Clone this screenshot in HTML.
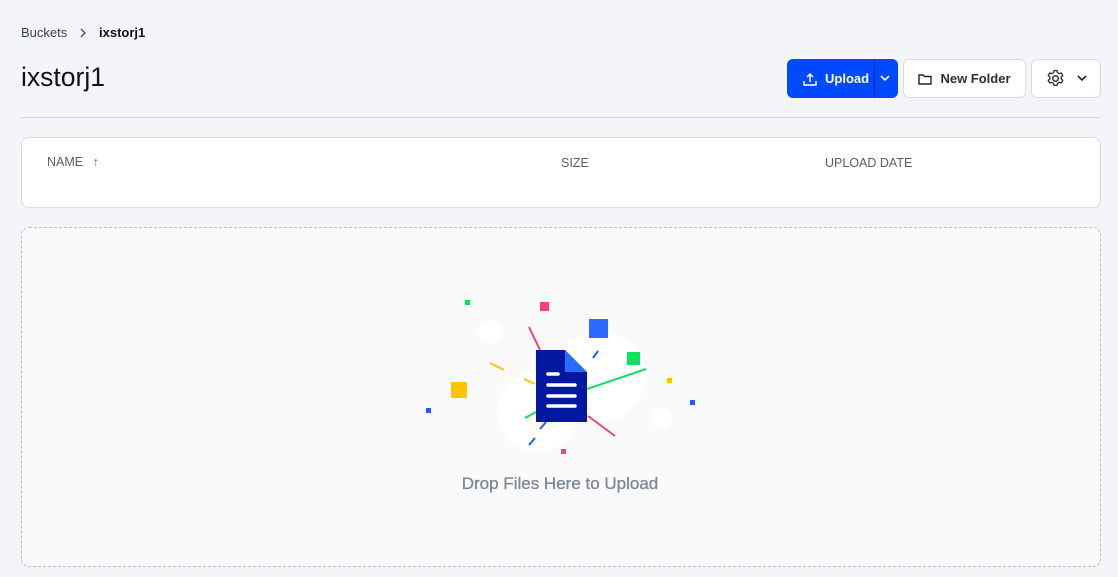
<!DOCTYPE html>
<html><head><style>
*{box-sizing:border-box;margin:0;padding:0}
body{width:1118px;height:577px;background:#f4f5f9;font-family:"Liberation Sans",sans-serif;position:relative;overflow:hidden;color:#1b2533}
.a{position:absolute}
.btn{position:absolute;top:59px;height:39px;border-radius:6px;display:flex;align-items:center;justify-content:center;font-weight:bold;font-size:13px}
</style></head><body>
<div class="a" style="left:21px;top:25px;font-size:13px;color:#384049">Buckets</div>
<svg class="a" style="left:79px;top:28px" width="8" height="10"><path d="M2 1l4 4-4 4" stroke="#555" stroke-width="1.5" fill="none"/></svg>
<div class="a" style="left:99px;top:25px;font-size:13px;font-weight:bold;color:#111">ixstorj1</div>
<div class="a" style="left:21px;top:62px;font-size:26.5px;color:#111">ixstorj1</div>
<div class="btn" style="left:787px;width:111px;background:#0149ff;color:#fff;justify-content:flex-start">
<svg style="margin-left:16px" width="14" height="14" viewBox="0 0 14 14"><path d="M7 10V2M4 5l3-3 3 3M1 9v4h12V9" stroke="#fff" stroke-width="1.5" fill="none"/></svg>
<span style="margin-left:8px">Upload</span>
<div style="position:absolute;left:87px;top:0;bottom:0;border-left:1px solid #0a2a99"></div>
<svg style="position:absolute;left:93px;top:16px" width="10" height="7"><path d="M1 1l4 4 4-4" stroke="#fff" stroke-width="1.6" fill="none"/></svg>
</div>
<div class="btn" style="left:903px;width:123px;background:#fff;border:1px solid #d8dbe2;color:#27303c">
<svg width="14" height="12" viewBox="0 0 14 12" style="margin-right:8px"><path d="M1 2h4l1.5 1.5H13V11H1z" stroke="#222" stroke-width="1.4" fill="none"/></svg>New Folder</div>
<div class="btn" style="left:1031px;width:70px;background:#fff;border:1px solid #d8dbe2">
<svg width="19" height="19" viewBox="0 0 18 18"><circle cx="9" cy="9" r="2.6" stroke="#333" stroke-width="1.4" fill="none"/><path d="M7.6 1.5h2.8l.5 2 1.6.9 2-.6 1.4 2.4-1.5 1.4v1.8l1.5 1.4-1.4 2.4-2-.6-1.6.9-.5 2H7.6l-.5-2-1.6-.9-2 .6-1.4-2.4 1.5-1.4V7.6L2.1 6.2l1.4-2.4 2 .6 1.6-.9z" stroke="#333" stroke-width="1.3" fill="none" stroke-linejoin="round"/></svg>
<svg style="margin-left:12px" width="10" height="7"><path d="M1 1l4 4 4-4" stroke="#222" stroke-width="1.6" fill="none"/></svg></div>
<div class="a" style="left:21px;top:117px;width:1080px;border-top:1px solid #d4d6dc"></div>
<div class="a" style="left:21px;top:137px;width:1080px;height:71px;background:#fff;border:1px solid #d8dbe2;border-radius:8px;font-size:12.5px;color:#56606d">
<span class="a" style="left:25px;top:17px">NAME <span style="margin-left:6px">↑</span></span>
<span class="a" style="left:539px;top:18px">SIZE</span>
<span class="a" style="left:803px;top:18px">UPLOAD DATE</span>
</div>
<div class="a" style="left:21px;top:227px;width:1080px;height:340px;background:#fafafa;border:1.5px dashed #b9bcc4;border-radius:8px"></div>
<svg class="a" style="left:0;top:0" width="1118" height="577">
<circle cx="490" cy="332" r="12" fill="#fff"/><circle cx="600" cy="377" r="45" fill="#fff"/><circle cx="537" cy="412" r="40" fill="#fff"/><circle cx="662" cy="418" r="10" fill="#fff"/>
<g stroke-width="2"><path d="M529 327L540 350M588 416L615 436" stroke="#f0407a"/><path d="M490 363L504 370M524 379L535 384" stroke="#ffc400"/><path d="M593 358L598 351M540 429L546 422M529 445L535 438" stroke="#1f5bff"/><path d="M587 389L646 369M525 418L536 412" stroke="#0ee060"/></g>
<rect x="465" y="300" width="5" height="5" fill="#0ee060"/><rect x="540" y="302" width="9" height="9" fill="#ff3d86"/><rect x="589" y="319" width="19" height="19" fill="#2b6bff"/><rect x="627" y="352" width="13" height="13" fill="#0ee060"/><rect x="451" y="382" width="16" height="16" fill="#ffc400"/><rect x="667" y="378" width="5" height="5" fill="#ffc400"/><rect x="426" y="408" width="5" height="5" fill="#1f5bff"/><rect x="690" y="400" width="5" height="5" fill="#1f5bff"/><rect x="561" y="449" width="5" height="5" fill="#ff3d86"/>
<path d="M536 350H565L587 372V422H536Z" fill="#0218a1"/><path d="M565 350L587 372H565Z" fill="#2b6bff"/>
<g stroke="#fff" stroke-width="3.5" stroke-linecap="round"><path d="M548 374H558M548 385H575M548 396H575M548 406H575"/></g>
</svg>
<div class="a" style="left:0;width:1118px;top:474px;text-align:center;font-size:17px;color:#7c8694;padding-left:2px;-webkit-text-stroke:0.3px #7c8694">Drop Files Here to Upload</div>
</body></html>
